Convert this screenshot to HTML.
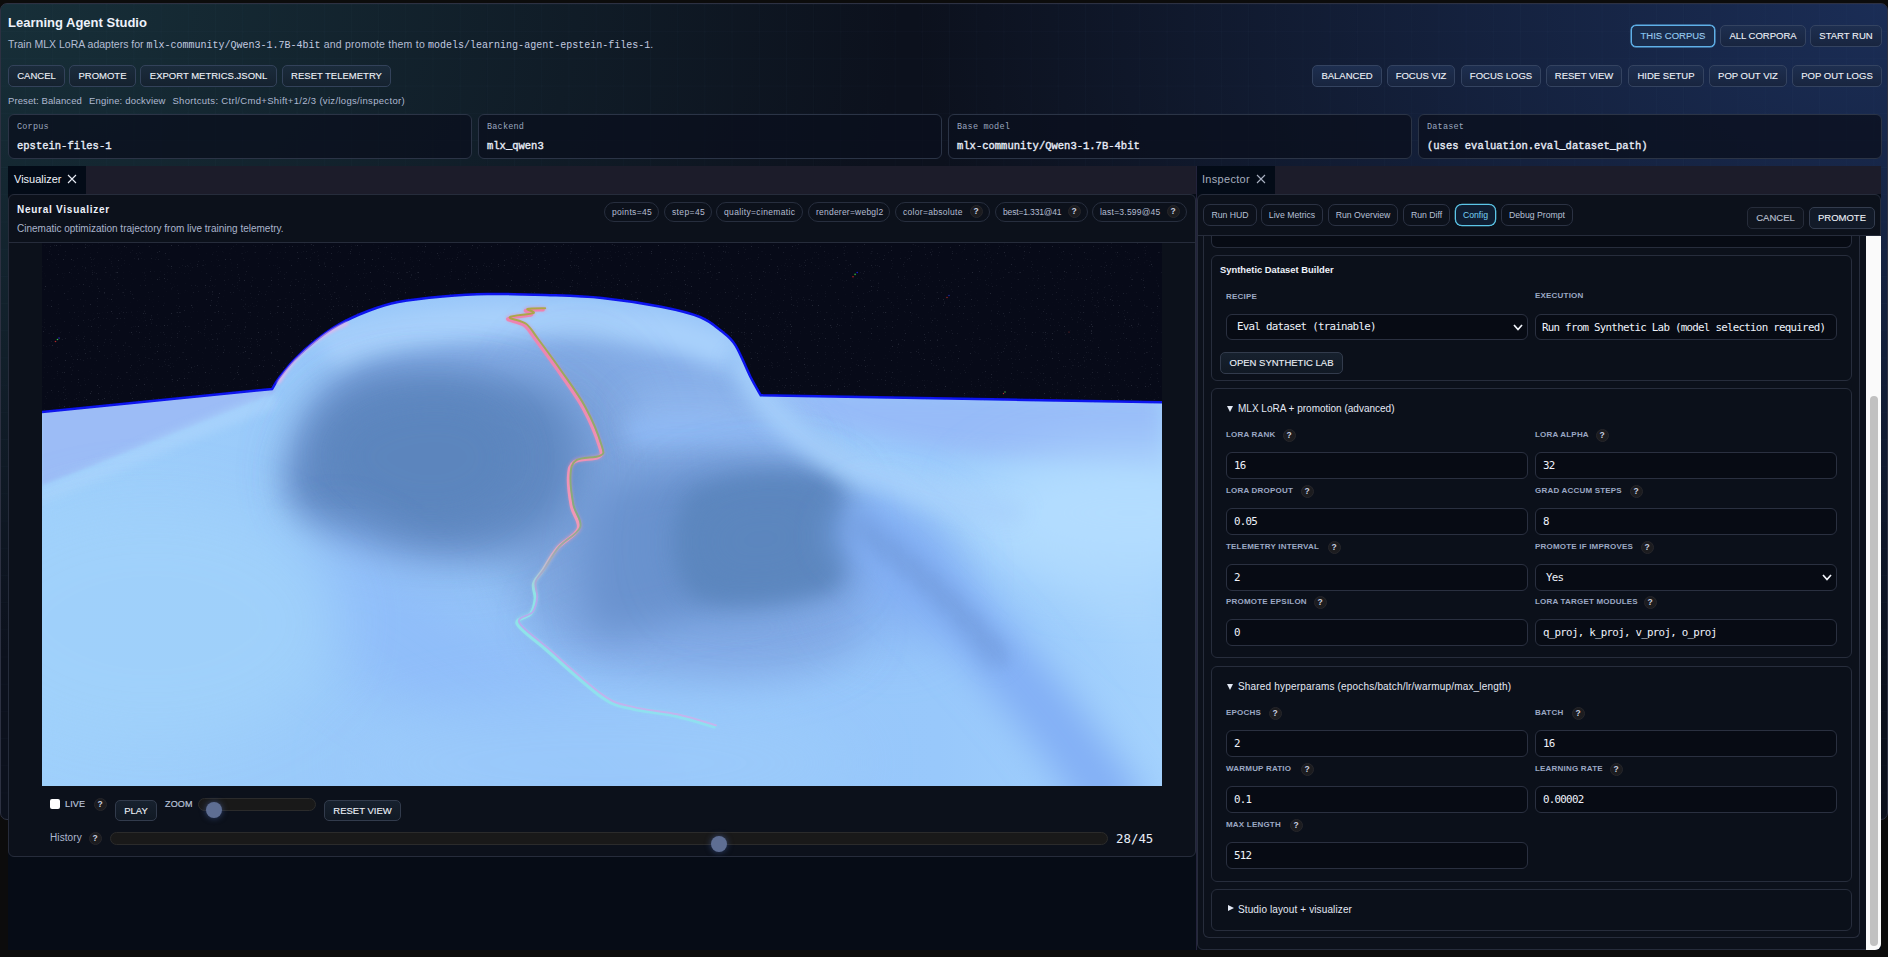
<!DOCTYPE html>
<html lang="en">
<head>
<meta charset="utf-8">
<title>Learning Agent Studio</title>
<style>
*{box-sizing:border-box;margin:0;padding:0}
html,body{width:1888px;height:957px;overflow:hidden;background:#0c0c0c}
body{position:relative;font-family:"Liberation Sans",sans-serif;color:#e6ecf8;-webkit-font-smoothing:antialiased}
.abs{position:absolute}
.mono{font-family:"Liberation Mono","DejaVu Sans Mono",monospace}
#shell{position:absolute;left:0;top:3px;width:1888px;height:817px;border:1px solid #2d3142;border-radius:7px;
 background:
  radial-gradient(ellipse 1250px 900px at 0% 0%,rgba(30,66,74,.62),rgba(30,66,74,0) 72%),
  radial-gradient(ellipse 1350px 950px at 100% 0%,rgba(32,56,108,.72),rgba(32,56,108,0) 72%),
  #0c111d;}
#grid{position:absolute;left:0;top:0;right:0;bottom:0;border-radius:8px;
 background-image:linear-gradient(rgba(140,170,220,.025) 1px,transparent 1px),linear-gradient(90deg,rgba(140,170,220,.025) 1px,transparent 1px);
 background-size:27.2px 27.2px;background-position:-3.5px 0px}
h1{position:absolute;left:8px;top:15px;font-size:13px;line-height:16px;font-weight:700;color:#eef2fb;white-space:nowrap}
#sub{position:absolute;left:8px;top:37.5px;font-size:10.5px;line-height:13px;color:#b4bdd4;white-space:nowrap}
#sub .mono{font-size:10px;color:#c3cbe0}
.btn{position:absolute;height:22px;border:1px solid #33425a;border-radius:5px;background:linear-gradient(#1b2c3c,#15222f);
 color:#eef2f9;font-size:9.5px;line-height:20px;text-align:center;white-space:nowrap;-webkit-text-stroke:.1px #eef2f9}
.btn.dk{background:linear-gradient(#17212e,#111924);border-color:#323b4c}
.btn.blue{background:linear-gradient(#1e2f50,#18253f);border-color:#344360}
.btn.active{border:1px solid #5fb0e8;color:#79c0f2;box-shadow:0 0 0 .5px #5fb0e8;background:#1a2c4c}
#status{position:absolute;left:8px;top:94.5px;font-size:9.5px;line-height:12px;color:#aeb8d0;white-space:nowrap;word-spacing:0}
.info{position:absolute;top:114px;height:45px;width:464px;border:1px solid #2b3446;border-radius:6px;background:rgba(10,16,30,.78)}
.info .l{position:absolute;left:8px;top:7px;font-size:8.5px;line-height:11px;color:#9aa5bd;letter-spacing:.2px}
.info .v{position:absolute;left:8px;top:24px;font-size:10.5px;line-height:14px;color:#e8edf8;font-weight:400;-webkit-text-stroke:.35px #e8edf8}
#dock{position:absolute;left:8px;top:166px;width:1873px;height:784px;background:#060c16}
.tabbar{position:absolute;height:28px;background:#1c1c2a}
.tab{position:absolute;height:28px;background:#030b17;font-size:11px;line-height:26px;padding-left:6px;color:#f0f3fa;white-space:nowrap}
.tab svg{position:absolute;top:8px}
.panel{position:absolute;border:1px solid #262c3b;border-radius:6px;background:#0c111b}
.pill{position:absolute;top:204px;height:22px;border:1px solid #2b3243;border-radius:7px;background:#0c111b;color:#b7c0d6;font-size:8.7px;line-height:20px;text-align:center;white-space:nowrap}
.pill.on{border-color:#5cc6e8;color:#78d2f2;background:#0f1d31;box-shadow:0 0 0 .3px #5cc6e8}
.chip{position:absolute;height:20px;border:1px solid #272e3e;border-radius:10px;background:#0c111b;color:#b4bdd2;font-size:8.5px;line-height:18px;padding-left:7px;white-space:nowrap}
.q{position:absolute;width:13px;height:13px;margin:-.5px 0 0 -.5px;border-radius:50%;background:#1c1c1f;border:1px solid #26262b;color:#c7cfe0;font-size:8.5px;font-weight:700;line-height:11px;text-align:center}
.card{position:absolute;left:7px;width:641px;border:1px solid #272d3c;border-radius:6px;background:#0b101a}
.lab{position:absolute;font-size:8px;line-height:10px;font-weight:700;color:#9ba8c4;letter-spacing:.2px;white-space:nowrap}
.inp{position:absolute;height:26.6px;font-family:"DejaVu Sans Mono","Liberation Mono",monospace;width:302px;border:1px solid #2a3040;border-radius:6px;background:#070b14;color:#eef2fa;font-size:10.8px;letter-spacing:-.72px;line-height:25.5px;padding-left:7px;white-space:nowrap;overflow:hidden}
.sum{position:absolute;left:26px;font-size:10px;line-height:12px;color:#e4e9f5;white-space:nowrap}
.tri{position:absolute;left:15px;width:0;height:0}
</style>
</head>
<body>
<div id="shell"><div id="grid"></div></div>

<h1>Learning Agent Studio</h1>
<div id="sub">Train MLX LoRA adapters for <span class="mono">mlx-community/Qwen3-1.7B-4bit</span><span style="letter-spacing:.23px"> and promote them to </span><span class="mono">models/learning-agent-epstein-files-1</span>.</div>

<!-- top right buttons -->
<div class="btn blue active" style="left:1631px;top:25px;width:84px">THIS CORPUS</div>
<div class="btn blue" style="left:1720px;top:25px;width:86px">ALL CORPORA</div>
<div class="btn blue" style="left:1810px;top:25px;width:72px">START RUN</div>

<!-- row 2 left -->
<div class="btn" style="left:8px;top:65px;width:57px">CANCEL</div>
<div class="btn" style="left:69px;top:65px;width:67px">PROMOTE</div>
<div class="btn" style="left:140px;top:65px;width:137px">EXPORT METRICS.JSONL</div>
<div class="btn" style="left:282px;top:65px;width:109px">RESET TELEMETRY</div>
<!-- row 2 right -->
<div class="btn blue" style="left:1312px;top:65px;width:70px">BALANCED</div>
<div class="btn blue" style="left:1387px;top:65px;width:68px">FOCUS VIZ</div>
<div class="btn blue" style="left:1461px;top:65px;width:80px">FOCUS LOGS</div>
<div class="btn blue" style="left:1546px;top:65px;width:76px">RESET VIEW</div>
<div class="btn blue" style="left:1628px;top:65px;width:76px">HIDE SETUP</div>
<div class="btn blue" style="left:1709px;top:65px;width:78px">POP OUT VIZ</div>
<div class="btn blue" style="left:1792px;top:65px;width:90px">POP OUT LOGS</div>

<div id="status"><span id="st1" class="abs" style="left:0;letter-spacing:.1px">Preset: Balanced</span><span id="st2" class="abs" style="left:81px;letter-spacing:.17px">Engine: dockview</span><span id="st3" class="abs" style="left:164.4px;letter-spacing:.32px">Shortcuts: Ctrl/Cmd+Shift+1/2/3 (viz/logs/inspector)</span></div>

<div class="info" style="left:8px"><div class="l mono">Corpus</div><div class="v mono">epstein-files-1</div></div>
<div class="info" style="left:478px"><div class="l mono">Backend</div><div class="v mono">mlx_qwen3</div></div>
<div class="info" style="left:948px"><div class="l mono">Base model</div><div class="v mono">mlx-community/Qwen3-1.7B-4bit</div></div>
<div class="info" style="left:1418px"><div class="l mono">Dataset</div><div class="v mono">(uses evaluation.eval_dataset_path)</div></div>

<div id="dock"></div>
<!-- tab bars -->
<div class="tabbar" style="left:8px;top:166px;width:1188px"></div>
<div class="tabbar" style="left:1197px;top:166px;width:684px"></div>
<div class="abs" style="left:1196px;top:166px;width:1px;height:784px;background:#23233c"></div>
<div class="tab" style="left:8px;top:166px;width:78px">Visualizer<svg style="left:59px" width="10" height="10" viewBox="0 0 10 10"><path d="M1 1L9 9M9 1L1 9" stroke="#e8ecf5" stroke-width="1.1" fill="none"/></svg></div>
<div class="tab" style="left:1197px;top:166px;width:78px;color:#a5adbe;padding-left:5px;letter-spacing:.3px">Inspector<svg style="left:59px" width="10" height="10" viewBox="0 0 10 10"><path d="M1 1L9 9M9 1L1 9" stroke="#aab2c2" stroke-width="1.1" fill="none"/></svg></div>

<!-- VISUALIZER PANEL -->
<div class="panel" style="left:8px;top:194px;width:1188px;height:663px"></div>
<div class="abs" style="left:9px;top:242px;width:1186px;height:1px;background:#262c3b"></div>
<div class="abs" style="left:17px;top:204.3px;font-size:10px;line-height:12px;font-weight:700;letter-spacing:.74px;color:#eef2fb;white-space:nowrap">Neural Visualizer</div>
<div class="abs" style="left:17px;top:222.6px;font-size:10px;line-height:12px;color:#aab4cc;white-space:nowrap">Cinematic optimization trajectory from live training telemetry.</div>
<div class="chip" style="left:604px;top:202px;width:55px;letter-spacing:0.33px">points=45</div>
<div class="chip" style="left:664px;top:202px;width:48px;letter-spacing:0.37px">step=45</div>
<div class="chip" style="left:716px;top:202px;width:87px;letter-spacing:0.35px">quality=cinematic</div>
<div class="chip" style="left:808px;top:202px;width:82px;letter-spacing:0.22px">renderer=webgl2</div>
<div class="chip" style="left:895px;top:202px;width:95px;letter-spacing:0.3px">color=absolute</div>
<div class="chip" style="left:995px;top:202px;width:93px;letter-spacing:-0.15px">best=1.331@41</div>
<div class="chip" style="left:1092px;top:202px;width:95px;letter-spacing:0.23px">last=3.599@45</div>
<div class="q" style="left:970px;top:205px">?</div>
<div class="q" style="left:1068px;top:205px">?</div>
<div class="q" style="left:1167px;top:205px">?</div>
<!-- CANVAS -->
<div id="canvas" class="abs" style="left:42px;top:243px;width:1120px;height:543px;background:#07091a;overflow:hidden"><svg width="1120" height="543" viewBox="0 0 1120 543" style="display:block">
<defs>
<linearGradient id="gsurf" x1="0" y1="0" x2="1" y2="0"><stop offset="0" stop-color="#9fd0fb"/><stop offset=".45" stop-color="#95c4f9"/><stop offset=".8" stop-color="#98c8fb"/><stop offset="1" stop-color="#a4d2fd"/></linearGradient>
<linearGradient id="gtraj" x1="0" y1="66" x2="0" y2="483" gradientUnits="userSpaceOnUse"><stop offset="0" stop-color="#f07fae"/><stop offset=".55" stop-color="#f59ab8"/><stop offset=".68" stop-color="#8fe6e6"/><stop offset="1" stop-color="#8fe0f0"/></linearGradient>
<linearGradient id="gtraj2" x1="0" y1="66" x2="0" y2="483" gradientUnits="userSpaceOnUse"><stop offset="0" stop-color="#a8a83a"/><stop offset=".5" stop-color="#7fae7a"/><stop offset=".7" stop-color="#b7a5ee"/><stop offset="1" stop-color="#c9b2ee"/></linearGradient>
<clipPath id="csurf"><path d="M0 169L230 146C231.2 144.2 233.3 139.8 237.0 135.0C240.7 130.2 246.0 123.2 252.0 117.0C258.0 110.8 265.6 103.9 273.0 98.0C280.4 92.1 287.8 86.6 296.6 81.6C305.4 76.6 316.1 71.8 326.0 68.0C335.9 64.2 343.6 61.4 356.0 59.0C368.4 56.6 385.7 54.7 400.5 53.4C415.3 52.1 427.8 51.2 445.0 51.0C462.2 50.8 484.8 51.3 504.0 52.0C523.2 52.7 540.8 53.0 560.0 55.0C579.2 57.0 602.7 60.6 619.0 63.8C635.3 67.0 648.0 70.0 658.0 74.0C668.0 78.0 672.8 82.8 678.7 87.5C684.6 92.2 688.6 94.6 693.5 102.3C698.4 110.0 704.1 125.2 708.3 133.5C712.5 141.8 717.0 149.1 718.7 152.2L1120 159.3L1120 543L0 543Z"/></clipPath>
<filter id="b30" filterUnits="userSpaceOnUse" x="-150" y="-150" width="1420" height="843"><feGaussianBlur stdDeviation="30"/></filter>
<filter id="b18" filterUnits="userSpaceOnUse" x="-150" y="-150" width="1420" height="843"><feGaussianBlur stdDeviation="18"/></filter>
<filter id="b10" filterUnits="userSpaceOnUse" x="-150" y="-150" width="1420" height="843"><feGaussianBlur stdDeviation="10"/></filter>
<filter id="b5" filterUnits="userSpaceOnUse" x="-150" y="-150" width="1420" height="843"><feGaussianBlur stdDeviation="5"/></filter>
<filter id="grain" x="0" y="0" width="100%" height="100%"><feTurbulence type="fractalNoise" baseFrequency=".85" numOctaves="1" seed="7"/><feColorMatrix type="matrix" values="0 0 0 0 .62  0 0 0 0 .66  0 0 0 0 .8  0 0 0 10 -6.9"/></filter>
<filter id="b2" filterUnits="userSpaceOnUse" x="-150" y="-150" width="1420" height="843"><feGaussianBlur stdDeviation="1.6"/></filter>
<filter id="b1" x="-20%" y="-20%" width="140%" height="140%"><feGaussianBlur stdDeviation=".7"/></filter>
</defs>
<rect width="1120" height="543" fill="#070a18"/>
<rect width="1120" height="175" filter="url(#grain)" opacity=".14"/>
<g><circle cx="15.5" cy="96.5" r=".8" fill="#35c04a"/><circle cx="13.5" cy="98.5" r=".8" fill="#b02a2a"/><circle cx="17" cy="95" r=".7" fill="#2a2ad0"/>
<circle cx="815.2" cy="29.5" r=".8" fill="#1a1ad8"/><circle cx="813.1" cy="31.4" r=".8" fill="#35b03a"/><circle cx="811" cy="33.7" r=".8" fill="#b82222"/>
<circle cx="905" cy="54.5" r=".7" fill="#a82828"/><circle cx="907" cy="52.5" r=".7" fill="#2626c0"/>
<circle cx="963" cy="149" r=".7" fill="#58b040"/><circle cx="961.5" cy="150.5" r=".7" fill="#a83030"/>
<circle cx="1027" cy="89" r=".6" fill="#903030"/></g>
<path d="M0 169L230 146C231.2 144.2 233.3 139.8 237.0 135.0C240.7 130.2 246.0 123.2 252.0 117.0C258.0 110.8 265.6 103.9 273.0 98.0C280.4 92.1 287.8 86.6 296.6 81.6C305.4 76.6 316.1 71.8 326.0 68.0C335.9 64.2 343.6 61.4 356.0 59.0C368.4 56.6 385.7 54.7 400.5 53.4C415.3 52.1 427.8 51.2 445.0 51.0C462.2 50.8 484.8 51.3 504.0 52.0C523.2 52.7 540.8 53.0 560.0 55.0C579.2 57.0 602.7 60.6 619.0 63.8C635.3 67.0 648.0 70.0 658.0 74.0C668.0 78.0 672.8 82.8 678.7 87.5C684.6 92.2 688.6 94.6 693.5 102.3C698.4 110.0 704.1 125.2 708.3 133.5C712.5 141.8 717.0 149.1 718.7 152.2L1120 159.3L1120 543L0 543Z" fill="url(#gsurf)"/>
<g clip-path="url(#csurf)">
 <!-- far plains (periwinkle) -->
 <path d="M0 160L236 138L232 151L0 243Z" fill="#9cbcf6" filter="url(#b2)"/>
 <path d="M715 148L1120 155L1120 236L900 208L760 178Z" fill="#97bbf8" filter="url(#b10)"/>
 <!-- left ridge highlight -->
 <path d="M-5 256C90 214 170 180 234 157" stroke="#a9d3fc" stroke-width="15" fill="none" filter="url(#b5)" opacity=".85"/>
 <!-- right lit area -->
 <path d="M735 175C800 225 900 235 1120 240L1120 420C1000 330 900 280 790 235Z" fill="#a9d5fd" filter="url(#b18)"/>
 <ellipse cx="1090" cy="270" rx="150" ry="60" fill="#b3ddff" filter="url(#b30)"/>
 <!-- hill body mid tone -->
 <path d="M246 250C250 192 276 130 332 103C420 74 600 72 668 100C715 125 730 175 760 212C800 245 830 300 820 400C760 440 640 450 560 420C500 400 480 330 500 300C380 330 268 318 246 250Z" fill="#86aee8" filter="url(#b18)"/>
 <!-- hill top highlight -->
 <path d="M285 112C380 66 600 62 690 112" stroke="#a9d1fc" stroke-width="36" fill="none" filter="url(#b10)"/>
 <!-- connecting mid tone -->
 <ellipse cx="535" cy="255" rx="70" ry="150" fill="#7ba3db" filter="url(#b30)" opacity=".85"/>
 <ellipse cx="405" cy="228" rx="150" ry="90" fill="#7097d0" filter="url(#b30)" opacity=".8"/>
 <ellipse cx="660" cy="385" rx="150" ry="42" fill="#80a9e6" filter="url(#b30)" opacity=".7"/>
 <ellipse cx="850" cy="330" rx="60" ry="70" fill="#80abef" filter="url(#b30)" opacity=".8"/>
 <!-- big front shadow -->
 <path d="M262 200C272 162 295 138 335 130C390 122 450 130 500 148C525 160 540 200 532 236C520 284 470 302 414 302C350 302 285 296 255 262C246 240 254 218 262 200Z" fill="#6189c2" filter="url(#b18)"/>
 <path d="M290 198C315 160 375 150 420 156C455 164 475 186 475 222C468 258 430 278 385 278C335 274 280 246 290 198Z" fill="#5b85bd" filter="url(#b18)" opacity=".9"/>
 <!-- shoulder lighter -->
 <path d="M590 180C650 165 720 175 770 215" stroke="#94bbf1" stroke-width="40" fill="none" filter="url(#b18)" opacity=".9"/>
 <path d="M586 190C650 184 720 190 776 204" stroke="#8fbaf6" stroke-width="24" fill="none" filter="url(#b10)" opacity=".8"/>
 <!-- right shadow -->
 <path d="M556 250C600 226 700 214 775 224C808 232 818 260 815 335C770 352 690 362 640 376C600 388 565 398 550 386C535 350 537 296 556 250Z" fill="#6a93cf" filter="url(#b18)"/>
 <path d="M650 248C690 232 750 226 790 240C806 262 806 330 790 346C740 360 680 366 650 352C628 322 628 276 650 248Z" fill="#5c86be" filter="url(#b10)" opacity=".9"/>
 <path d="M650 248C690 232 750 226 790 240C806 262 806 330 790 346C740 360 680 366 650 352C628 322 628 276 650 248Z" fill="#5c86be" filter="url(#b30)" opacity=".6"/>
 <!-- right lit ridge -->
 <path d="M698 112C712 150 735 180 790 214C840 240 900 256 980 272" stroke="#a8d1fc" stroke-width="24" fill="none" filter="url(#b10)" opacity=".9"/>
 <!-- dark streak -->
 <path d="M806 272C880 330 985 430 1080 575" stroke="#82aff5" stroke-width="58" fill="none" filter="url(#b18)"/>
 <path d="M810 278C855 310 905 350 960 420" stroke="#7099d8" stroke-width="24" fill="none" filter="url(#b10)" opacity=".6"/>
 <g stroke="#6e96d4" stroke-width="3" opacity=".35" filter="url(#b5)"><path d="M830 290l14 30M850 300l14 34M870 315l14 34M890 332l14 34M910 350l14 34M930 370l14 34M950 392l14 32"/></g>
 <!-- foreground tones -->
 <path d="M260 330L620 570" stroke="#8dbaf9" stroke-width="110" fill="none" filter="url(#b30)" opacity=".75"/>
 <ellipse cx="110" cy="380" rx="190" ry="120" fill="#a0d1fb" filter="url(#b30)" opacity=".9"/>
 <ellipse cx="560" cy="520" rx="260" ry="70" fill="#9bcbfb" filter="url(#b30)" opacity=".8"/>
</g>
<path d="M0 169L230 146C231.2 144.2 233.3 139.8 237.0 135.0C240.7 130.2 246.0 123.2 252.0 117.0C258.0 110.8 265.6 103.9 273.0 98.0C280.4 92.1 287.8 86.6 296.6 81.6C305.4 76.6 316.1 71.8 326.0 68.0C335.9 64.2 343.6 61.4 356.0 59.0C368.4 56.6 385.7 54.7 400.5 53.4C415.3 52.1 427.8 51.2 445.0 51.0C462.2 50.8 484.8 51.3 504.0 52.0C523.2 52.7 540.8 53.0 560.0 55.0C579.2 57.0 602.7 60.6 619.0 63.8C635.3 67.0 648.0 70.0 658.0 74.0C668.0 78.0 672.8 82.8 678.7 87.5C684.6 92.2 688.6 94.6 693.5 102.3C698.4 110.0 704.1 125.2 708.3 133.5C712.5 141.8 717.0 149.1 718.7 152.2L1120 159.3" stroke="#0a12ee" stroke-width="2.5" fill="none" filter="url(#b1)"/>
<path d="M236 140C252 112 275 92 306 80" stroke="#f3b4e6" stroke-width="4" fill="none" filter="url(#b2)" opacity=".75" clip-path="url(#csurf)"/>
<g fill="none" stroke-linecap="round" stroke-linejoin="round">
 <path d="M502.0 66.0C499.1 66.1 486.3 65.9 484.3 66.7C482.3 67.5 493.2 69.6 490.2 71.0C487.2 72.4 467.7 73.2 466.5 75.0C465.3 76.8 478.1 78.0 482.8 81.5C487.5 85.0 488.7 88.4 494.6 96.3C500.5 104.2 510.5 117.6 518.4 129.0C526.3 140.4 535.3 152.3 542.0 164.6C548.7 176.9 555.9 194.8 558.4 203.0C560.9 211.2 561.2 211.0 557.0 213.5C552.8 216.0 538.2 214.8 533.2 218.0C528.2 221.2 527.8 225.4 527.3 232.8C526.8 240.2 528.6 253.8 530.2 262.5C531.8 271.2 539.4 278.0 537.0 285.0C534.6 292.0 522.0 297.5 516.0 304.5C510.1 311.5 505.2 320.9 501.3 326.8C497.4 332.7 493.6 335.3 492.4 340.0C491.2 344.7 494.5 350.0 494.0 355.0C493.5 360.0 492.5 365.6 489.5 369.8C486.5 374.0 473.5 374.3 476.0 380.2C478.5 386.1 490.3 393.3 504.3 405.4C518.3 417.5 545.8 443.0 560.0 452.9C574.2 462.8 577.3 461.5 589.7 464.7C602.1 467.9 620.4 469.1 634.2 472.1C648.0 475.2 666.3 481.2 672.7 483.0" stroke="url(#gtraj)" stroke-width="5" filter="url(#b2)" opacity=".45"/>
 <path d="M502.0 66.0C499.1 66.1 486.3 65.9 484.3 66.7C482.3 67.5 493.2 69.6 490.2 71.0C487.2 72.4 467.7 73.2 466.5 75.0C465.3 76.8 478.1 78.0 482.8 81.5C487.5 85.0 488.7 88.4 494.6 96.3C500.5 104.2 510.5 117.6 518.4 129.0C526.3 140.4 535.3 152.3 542.0 164.6C548.7 176.9 555.9 194.8 558.4 203.0C560.9 211.2 561.2 211.0 557.0 213.5C552.8 216.0 538.2 214.8 533.2 218.0C528.2 221.2 527.8 225.4 527.3 232.8C526.8 240.2 528.6 253.8 530.2 262.5C531.8 271.2 539.4 278.0 537.0 285.0C534.6 292.0 522.0 297.5 516.0 304.5C510.1 311.5 505.2 320.9 501.3 326.8C497.4 332.7 493.6 335.3 492.4 340.0C491.2 344.7 494.5 350.0 494.0 355.0C493.5 360.0 492.5 365.6 489.5 369.8C486.5 374.0 473.5 374.3 476.0 380.2C478.5 386.1 490.3 393.3 504.3 405.4C518.3 417.5 545.8 443.0 560.0 452.9C574.2 462.8 577.3 461.5 589.7 464.7C602.1 467.9 620.4 469.1 634.2 472.1C648.0 475.2 666.3 481.2 672.7 483.0" stroke="url(#gtraj)" stroke-width="3.2" transform="translate(-.8 .8)" opacity=".95"/>
 <path d="M502.0 66.0C499.1 66.1 486.3 65.9 484.3 66.7C482.3 67.5 493.2 69.6 490.2 71.0C487.2 72.4 467.7 73.2 466.5 75.0C465.3 76.8 478.1 78.0 482.8 81.5C487.5 85.0 488.7 88.4 494.6 96.3C500.5 104.2 510.5 117.6 518.4 129.0C526.3 140.4 535.3 152.3 542.0 164.6C548.7 176.9 555.9 194.8 558.4 203.0C560.9 211.2 561.2 211.0 557.0 213.5C552.8 216.0 538.2 214.8 533.2 218.0C528.2 221.2 527.8 225.4 527.3 232.8C526.8 240.2 528.6 253.8 530.2 262.5C531.8 271.2 539.4 278.0 537.0 285.0C534.6 292.0 522.0 297.5 516.0 304.5C510.1 311.5 505.2 320.9 501.3 326.8C497.4 332.7 493.6 335.3 492.4 340.0C491.2 344.7 494.5 350.0 494.0 355.0C493.5 360.0 492.5 365.6 489.5 369.8C486.5 374.0 473.5 374.3 476.0 380.2C478.5 386.1 490.3 393.3 504.3 405.4C518.3 417.5 545.8 443.0 560.0 452.9C574.2 462.8 577.3 461.5 589.7 464.7C602.1 467.9 620.4 469.1 634.2 472.1C648.0 475.2 666.3 481.2 672.7 483.0" stroke="url(#gtraj2)" stroke-width="2" transform="translate(1.2 -.8)" opacity=".9"/>
</g>
</svg></div>
<!-- controls -->
<div class="abs" style="left:50px;top:799px;width:10px;height:10px;background:#fff;border-radius:2px"></div>
<div class="abs" style="left:65px;top:798px;font-size:9px;line-height:12px;color:#b8c2d8;white-space:nowrap;letter-spacing:.15px;-webkit-text-stroke:.2px #b8c2d8">LIVE</div>
<div class="q" style="left:94px;top:798px">?</div>
<div class="btn dk" style="left:115px;top:800px;width:42px;height:21px;line-height:19px">PLAY</div>
<div class="abs" style="left:165px;top:798px;font-size:9px;line-height:12px;color:#b8c2d8;white-space:nowrap;letter-spacing:.15px;-webkit-text-stroke:.2px #b8c2d8">ZOOM</div>
<div class="abs" style="left:198px;top:798px;width:118px;height:13px;border-radius:7px;background:#191919;border:1px solid #2b2b2b"></div>
<div class="abs" style="left:206px;top:802px;width:16px;height:16px;border-radius:50%;background:#5e6e93;box-shadow:0 0 6px rgba(80,110,180,.55)"></div>
<div class="btn dk" style="left:324px;top:800px;width:77px;height:21px;line-height:19px">RESET VIEW</div>
<div class="abs" style="left:50px;top:832px;font-size:10px;line-height:12px;color:#aeb8d0;white-space:nowrap;letter-spacing:.1px">History</div>
<div class="q" style="left:89px;top:832px">?</div>
<div class="abs" style="left:110px;top:832px;width:998px;height:13px;border-radius:7px;background:#191919;border:1px solid #2b2b2b"></div>
<div class="abs" style="left:711px;top:836px;width:16px;height:16px;border-radius:50%;background:#5e6e93;box-shadow:0 0 6px rgba(80,110,180,.55)"></div>
<div class="abs" style="left:1116px;top:830.6px;font-family:'DejaVu Sans Mono','Liberation Mono',monospace;font-size:12.4px;line-height:16px;color:#e8edf8;white-space:nowrap">28/45</div>

<!-- INSPECTOR PANEL -->
<div class="panel" style="left:1197px;top:194px;width:684px;height:756px"></div>
<div class="pill" style="left:1203px;width:54px">Run HUD</div>
<div class="pill" style="left:1261px;width:62px">Live Metrics</div>
<div class="pill" style="left:1328px;width:70px">Run Overview</div>
<div class="pill" style="left:1403px;width:47px">Run Diff</div>
<div class="pill on" style="left:1455px;width:41px">Config</div>
<div class="pill" style="left:1501px;width:72px">Debug Prompt</div>
<div class="btn" style="left:1747px;top:207px;width:57px;color:#aab3c6;background:#10151f;border-color:#262c3a">CANCEL</div>
<div class="btn" style="left:1809px;top:207px;width:66px;background:#121a28;border-color:#333c4e">PROMOTE</div>
<div class="abs" style="left:1198px;top:235px;width:682px;height:1px;background:#262c3b"></div>
<div class="abs" style="left:1203px;top:236px;width:657px;height:702px;border:1px solid #272d3c;border-top:none;border-radius:0 0 6px 6px"></div>
<div class="abs" style="left:1211px;top:236px;width:641px;height:12px;border:1px solid #272d3c;border-top:none;border-radius:0 0 6px 6px;background:#070b14"></div>
<div class="abs" style="left:1866px;top:236px;width:15px;height:713.5px;background:#fafafa;border-radius:0 0 6px 0"></div>
<div class="abs" style="left:1870px;top:396px;width:8px;height:550px;background:#c1c1c1;border-radius:4px"></div>
<div class="card" style="left:1211px;top:255px;width:641px;height:126px"></div>
<div class="abs" style="left:1220px;top:264px;font-size:9.4px;line-height:12px;font-weight:700;color:#eef2fb;white-space:nowrap">Synthetic Dataset Builder</div>
<div class="lab" style="left:1226px;top:292px">RECIPE</div>
<div class="lab" style="left:1535px;top:291px">EXECUTION</div>
<div class="inp" style="left:1226px;top:314.3px;height:25.6px;line-height:24.5px;width:302px;padding-left:10px">Eval dataset (trainable)<svg class="abs" style="right:3px;top:8px" width="12" height="9" viewBox="0 0 12 9"><path d="M2 2L6 6.5L10 2" stroke="#f2f5fb" stroke-width="1.7" fill="none"/></svg></div>
<div class="inp" style="left:1535px;top:313.5px;width:302px;padding-left:6px">Run from Synthetic Lab (model selection required)</div>
<div class="btn dk" style="left:1220px;top:352px;width:123px">OPEN SYNTHETIC LAB</div>
<div class="card" style="left:1211px;top:388px;width:641px;height:270px"></div>
<div class="tri" style="left:1227px;top:406px;border-left:3.5px solid transparent;border-right:3.5px solid transparent;border-top:6px solid #e4e9f5"></div>
<div class="sum" style="left:1238px;top:403px">MLX LoRA + promotion (advanced)</div>
<div class="lab" style="left:1226px;top:430px">LORA RANK</div>
<div class="q" style="left:1283px;top:429px">?</div>
<div class="inp" style="left:1226px;top:452px;width:302px;padding-left:7px">16</div>
<div class="lab" style="left:1535px;top:430px">LORA ALPHA</div>
<div class="q" style="left:1596px;top:429px">?</div>
<div class="inp" style="left:1535px;top:452px;width:302px;padding-left:7px">32</div>
<div class="lab" style="left:1226px;top:486px">LORA DROPOUT</div>
<div class="q" style="left:1301px;top:485px">?</div>
<div class="inp" style="left:1226px;top:508px;width:302px;padding-left:7px">0.05</div>
<div class="lab" style="left:1535px;top:486px">GRAD ACCUM STEPS</div>
<div class="q" style="left:1630px;top:485px">?</div>
<div class="inp" style="left:1535px;top:508px;width:302px;padding-left:7px">8</div>
<div class="lab" style="left:1226px;top:542px">TELEMETRY INTERVAL</div>
<div class="q" style="left:1328px;top:541px">?</div>
<div class="inp" style="left:1226px;top:564px;width:302px;padding-left:7px">2</div>
<div class="lab" style="left:1535px;top:542px">PROMOTE IF IMPROVES</div>
<div class="q" style="left:1641px;top:541px">?</div>
<div class="inp" style="left:1535px;top:564px;width:302px;padding-left:10px">Yes<svg class="abs" style="right:3px;top:8px" width="12" height="9" viewBox="0 0 12 9"><path d="M2 2L6 6.5L10 2" stroke="#f2f5fb" stroke-width="1.7" fill="none"/></svg></div>
<div class="lab" style="left:1226px;top:597px">PROMOTE EPSILON</div>
<div class="q" style="left:1314px;top:596px">?</div>
<div class="inp" style="left:1226px;top:619px;width:302px;padding-left:7px">0</div>
<div class="lab" style="left:1535px;top:597px">LORA TARGET MODULES</div>
<div class="q" style="left:1644px;top:596px">?</div>
<div class="inp" style="left:1535px;top:619px;width:302px;padding-left:7px">q_proj, k_proj, v_proj, o_proj</div>
<div class="card" style="left:1211px;top:666px;width:641px;height:216px"></div>
<div class="tri" style="left:1227px;top:684px;border-left:3.5px solid transparent;border-right:3.5px solid transparent;border-top:6px solid #e4e9f5"></div>
<div class="sum" style="left:1238px;top:681.3px;letter-spacing:.18px">Shared hyperparams (epochs/batch/lr/warmup/max_length)</div>
<div class="lab" style="left:1226px;top:708px">EPOCHS</div>
<div class="q" style="left:1269px;top:707px">?</div>
<div class="inp" style="left:1226px;top:730px;width:302px;padding-left:7px">2</div>
<div class="lab" style="left:1535px;top:708px">BATCH</div>
<div class="q" style="left:1572px;top:707px">?</div>
<div class="inp" style="left:1535px;top:730px;width:302px;padding-left:7px">16</div>
<div class="lab" style="left:1226px;top:764px">WARMUP RATIO</div>
<div class="q" style="left:1301px;top:763px">?</div>
<div class="inp" style="left:1226px;top:786px;width:302px;padding-left:7px">0.1</div>
<div class="lab" style="left:1535px;top:764px">LEARNING RATE</div>
<div class="q" style="left:1610px;top:763px">?</div>
<div class="inp" style="left:1535px;top:786px;width:302px;padding-left:7px">0.00002</div>
<div class="lab" style="left:1226px;top:820px">MAX LENGTH</div>
<div class="q" style="left:1290px;top:819px">?</div>
<div class="inp" style="left:1226px;top:842px;width:302px;padding-left:7px">512</div>
<div class="card" style="left:1211px;top:888.5px;width:641px;height:42.5px"></div>
<div class="tri" style="left:1228px;top:905px;border-top:3.5px solid transparent;border-bottom:3.5px solid transparent;border-left:6px solid #e4e9f5"></div>
<div class="sum" style="left:1238px;top:903.5px;letter-spacing:.12px">Studio layout + visualizer</div>

</body>
</html>
